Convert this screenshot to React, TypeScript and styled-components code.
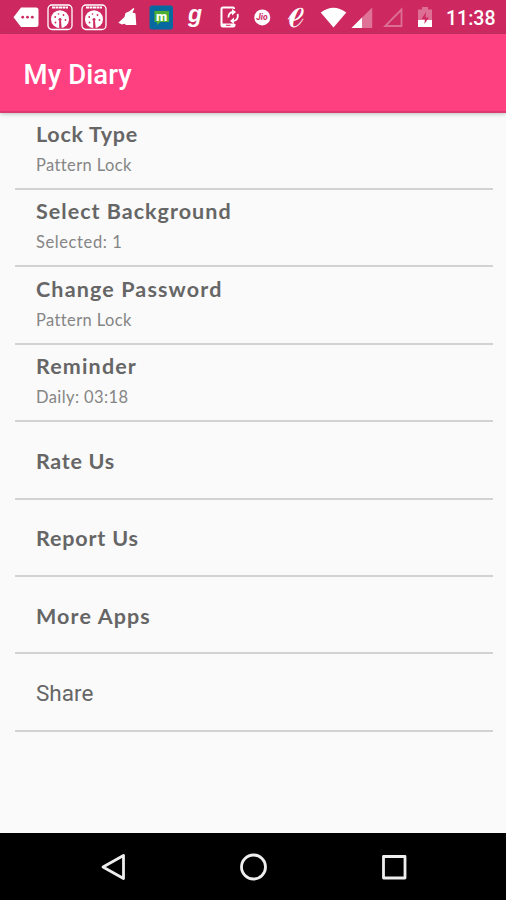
import React from "react";
import styled, { createGlobalStyle } from "styled-components";

const GlobalStyle = createGlobalStyle`
  * { box-sizing: border-box; }
  body { margin: 0; background: #fafafa; }
`;

const Screen = styled.div`
  display: flex;
  flex-direction: column;
  width: 506px;
  height: 900px;
  overflow: hidden;
  background: #fafafa;
  font-family: Roboto, sans-serif;
`;

const StatusBar = styled.div`
  display: flex;
  flex: none;
  height: 34px;
  background: #cd2960;
  color: #fff;
`;

const StatusIcon = styled.svg<{ $gap: number }>`
  flex: none;
  display: block;
  height: 34px;
  margin-left: ${(p) => p.$gap}px;
  fill: #fff;
  overflow: visible;
`;

const Clock = styled.div`
  margin-left: 13px;
  font-size: 19.5px;
  font-weight: 500;
  line-height: 37px;
  white-space: nowrap;
`;

const AppBar = styled.header`
  position: relative;
  flex: none;
  display: flex;
  align-items: center;
  height: 79px;
  padding: 5px 23.5px 0;
  background: #ff4080;
  border-bottom: 2px solid #dd3a70;
  box-shadow: 0 1px 4px rgba(60, 90, 80, 0.35);
`;

const Title = styled.h1`
  margin: 0;
  color: #fff;
  font-size: 27.5px;
  font-weight: 500;
  line-height: 34px;
  letter-spacing: 0.1px;
`;

const Settings = styled.main`
  flex: 1;
  display: grid;
  grid-template-rows: 77px;
  grid-auto-rows: 77.4px;
  padding: 0 13px 0 15px;
`;

const Row = styled.div<{ $centered: boolean }>`
  display: flex;
  flex-direction: column;
  justify-content: ${(p) => (p.$centered ? "center" : "flex-start")};
  padding: ${(p) => (p.$centered ? "2px" : "7.4px")} 21px 0;
  border-bottom: 2px solid #d3d1d2;
`;

const Label = styled.div<{ $spacing: number; $plain?: boolean }>`
  color: #666;
  font-family: ${(p) => (p.$plain ? "Roboto" : "Lato")}, sans-serif;
  font-size: ${(p) => (p.$plain ? 22.5 : 21.5)}px;
  font-weight: ${(p) => (p.$plain ? 400 : 700)};
  line-height: 28px;
  letter-spacing: ${(p) => p.$spacing}px;
  white-space: nowrap;
`;

const Detail = styled.div<{ $spacing: number }>`
  margin-top: 5px;
  color: #858585;
  font-family: Lato, sans-serif;
  font-size: 16.5px;
  line-height: 24px;
  letter-spacing: ${(p) => p.$spacing}px;
  white-space: nowrap;
`;

const NavBar = styled.nav`
  flex: none;
  display: flex;
  align-items: center;
  justify-content: space-between;
  height: 67px;
  padding: 0 99px;
  background: #000;
`;

const NavIcon = styled.svg`
  width: 28px;
  height: 28px;
  fill: none;
  stroke: #eee;
  stroke-width: 2.8;
  stroke-linejoin: round;
`;

function ReelIcon({ gap }: { gap: number }) {
  return (
    <StatusIcon $gap={gap} width="26" viewBox="0 0 26 34">
      <rect x="1" y="5" width="24" height="24.5" rx="4" fill="none" stroke="#fff" strokeWidth="1.3" />
      <path d="M5 7.500h16" stroke="#fff" strokeWidth="2.200" strokeDasharray="3 .5" />
      <circle cx="13" cy="19.200" r="9" />
      <g fill="#cd2960">
        <circle cx="13" cy="19.500" r="1.500" />
        <circle cx="8.200" cy="17" r=".9" />
        <circle cx="11.500" cy="14" r=".8" />
        <circle cx="16.500" cy="15" r=".9" />
        <circle cx="18.500" cy="20" r=".9" />
        <circle cx="8.500" cy="22.500" r=".9" />
        <path d="M12.200 21h1.800l.7 7.200h-2.500z" />
      </g>
    </StatusIcon>
  );
}

type SettingRow = {
  label: string;
  spacing: number;
  plain?: boolean;
  detail?: string;
  detailSpacing?: number;
};

const rows: SettingRow[] = [
  { label: "Lock Type", spacing: 0.72, detail: "Pattern Lock", detailSpacing: 0.38 },
  { label: "Select Background", spacing: 1.02, detail: "Selected: 1", detailSpacing: 0.6 },
  { label: "Change Password", spacing: 1.14, detail: "Pattern Lock", detailSpacing: 0.38 },
  { label: "Reminder", spacing: 1.14, detail: "Daily: 03:18", detailSpacing: 0.4 },
  { label: "Rate Us", spacing: 0.7 },
  { label: "Report Us", spacing: 0.82 },
  { label: "More Apps", spacing: 1.12 },
  { label: "Share", spacing: 0, plain: true },
];

export default function App() {
  return (
    <Screen>
      <GlobalStyle />
      <StatusBar>
        <StatusIcon $gap={13} width="26" viewBox="0 0 26 34">
          <path d="M8 7.5h15q2.5 0 2.5 2.5v14.500q0 2.500-2.500 2.500H8L.5 17.200z" />
          <g fill="#cd2960">
            <circle cx="9.700" cy="17.200" r="1.400" />
            <circle cx="14.500" cy="17.200" r="1.400" />
            <circle cx="19.300" cy="17.200" r="1.400" />
          </g>
        </StatusIcon>
        <ReelIcon gap={8} />
        <ReelIcon gap={8} />
        <StatusIcon $gap={11} width="19" viewBox="0 0 19 34">
          <path d="M.3 22.800 6.500 17l1-4 3.500-1.500L15.500 8l.8.800-1.800 3.700 3 1 .8 11.500H8l-1.500-1.200-2.500.7z" />
        </StatusIcon>
        <StatusIcon $gap={12} width="25" viewBox="0 0 25 34">
          <rect x=".5" y="5.500" width="23.500" height="24" rx="2.500" fill="#0868a0" />
          <path d="M5.500 11h14.500v11h-8.500l-3.500 3v-3H5.500z" fill="#4caf32" />
          <text x="12.700" y="20.500" textAnchor="middle" fontFamily="Roboto" fontSize="13" fontWeight="900">m</text>
        </StatusIcon>
        <StatusIcon $gap={13} width="18" viewBox="0 0 18 34">
          <text x="1" y="21.800" fontFamily="Liberation Sans" fontStyle="italic" fontSize="23" fontWeight="700">g</text>
        </StatusIcon>
        <StatusIcon $gap={14} width="21" viewBox="0 0 21 34">
          <path d="M15 9V8.500Q15 7.500 14 7.500H4Q2.500 7.500 2.500 9v16q0 1.500 1.500 1.500h10q1.500 0 1.500-1.500v-1" fill="none" stroke="#fff" strokeWidth="2" />
          <path d="M3 23.500h12.500v3H3z" />
          <path d="M7 25.300h4.500" stroke="#cd2960" strokeWidth="1" />
          <path d="M9.500 17.500a4.800 4.800 0 0 1 4.500-5.500M18.500 14a5 5 0 0 1-4.500 7" fill="none" stroke="#fff" strokeWidth="1.900" />
          <path d="m13 9 4 3-4 3.500zM15 17.500l-4 3.500 4 3z" />
        </StatusIcon>
        <StatusIcon $gap={14} width="17" viewBox="0 0 17 34">
          <circle cx="8.300" cy="17.400" r="8" />
          <text x="8" y="20.300" textAnchor="middle" fill="#cd2960" fontFamily="Roboto" fontStyle="italic" fontWeight="700" fontSize="8.500">Jio</text>
        </StatusIcon>
        <StatusIcon $gap={15} width="21" viewBox="0 0 21 34">
          <text transform="translate(.5 27) scale(1.450 1.850)" x="0" y="0" fontFamily="DejaVu Serif" fontSize="26">ℯ</text>
        </StatusIcon>
        <StatusIcon $gap={13} width="27" viewBox="0 0 27 34">
          <path d="M.7 12.500Q13.500 3 26.300 12.500L13.500 27.500z" />
        </StatusIcon>
        <StatusIcon $gap={4} width="22" viewBox="0 0 22 34">
          <path d="M21.200 7.500v20.500H.5z" opacity=".35" />
          <path d="M11 17.600V28H.5z" />
        </StatusIcon>
        <StatusIcon $gap={9} width="22" viewBox="0 0 22 34">
          <path d="M19.500 9.500v16.500H3.200z" fill="none" stroke="#fff" strokeWidth="1.800" opacity=".33" />
        </StatusIcon>
        <StatusIcon $gap={13} width="16" viewBox="0 0 16 34">
          <path d="M5 7h6v2.500h4V20H1V9.500h4z" opacity=".33" />
          <path d="M1 20h14v7H1z" />
          <path d="M9 12 4.500 19H8l-.7 5L12 17.500H8.500z" fill="#cd2960" />
        </StatusIcon>
        <Clock>11:38</Clock>
      </StatusBar>
      <AppBar>
        <Title>My Diary</Title>
      </AppBar>
      <Settings>
        {rows.map((row) => (
          <Row key={row.label} $centered={!row.detail}>
            <Label $spacing={row.spacing} $plain={row.plain}>{row.label}</Label>
            {row.detail && <Detail $spacing={row.detailSpacing ?? 0}>{row.detail}</Detail>}
          </Row>
        ))}
      </Settings>
      <NavBar>
        <NavIcon viewBox="0 0 28 28"><path d="M4 14 24.500 2.500v23z" /></NavIcon>
        <NavIcon viewBox="0 0 28 28"><circle cx="14.500" cy="14" r="12" /></NavIcon>
        <NavIcon viewBox="0 0 28 28"><rect x="4.500" y="3.500" width="21.500" height="21.500" /></NavIcon>
      </NavBar>
    </Screen>
  );
}
